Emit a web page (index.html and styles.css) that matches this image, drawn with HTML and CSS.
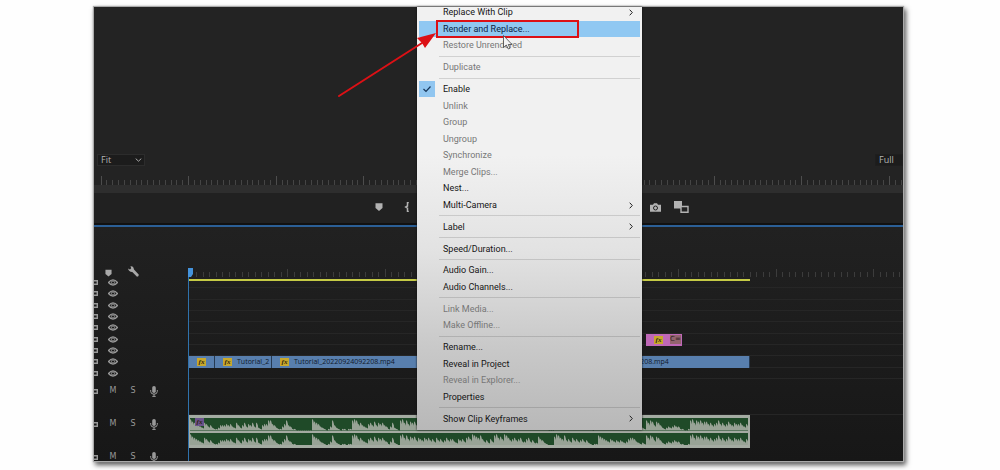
FILE: index.html
```html
<!DOCTYPE html>
<html lang="en">
<head>
<meta charset="utf-8">
<title>Render and Replace</title>
<link rel="stylesheet" href="styles.css">
</head>
<body>
<svg class="defs" aria-hidden="true">
  <symbol id="eye" viewBox="0 0 10 7"><path d="M.5 3.500Q5-1.800 9.500 3.500Q5 8.800.5 3.500Z" fill="none" stroke="currentColor" stroke-width="1.300"/><circle cx="5" cy="3.500" r="1.600" fill="none" stroke="currentColor"/></symbol>
  <symbol id="patch" viewBox="0 0 4 5"><path d="M0 .7H3.300V4.300H0" fill="none" stroke="currentColor" stroke-width="1.400"/></symbol>
  <symbol id="mic" viewBox="0 0 8 11"><rect x="2.200" y="0" width="3.600" height="7" rx="1.800" fill="currentColor"/><path d="M.7 4V5.500Q.8 8.200 4 8.200T7.300 5.500V4M4 8V10.500M2.300 10.400H5.700" fill="none" stroke="currentColor"/></symbol>
  <symbol id="marker" viewBox="0 0 8 8"><path d="M.5.3H7.500V5L4 8L.5 5Z" fill="currentColor"/></symbol>
  <symbol id="sub" viewBox="0 0 4 7"><path d="M.7.700L3.300 3.500L.7 6.300" fill="none" stroke="#222" stroke-width="1"/></symbol>
</svg>
<main class="panel">
  <section class="monitor">
    <div class="zoom-box">
      <select class="zoom-level" aria-label="Zoom level"><option>Fit</option></select>
      <svg class="chevron" viewBox="0 0 7 4" aria-hidden="true"><path d="M.7.600L3.500 3.200L6.300.6" fill="none" stroke="#aaa"/></svg>
    </div>
    <select class="resolution" aria-label="Playback resolution"><option>Full</option></select>
  </section>
  <svg class="monitor-ruler" data-start="6.500" data-major="87.600" data-height="9"></svg>
  <div class="scrollbar"></div>
  <nav class="transport" aria-label="Playback controls">
    <div class="marks">
      <button aria-label="Add marker"><svg class="i8"><use href="#marker"/></svg></button>
      <button aria-label="Mark in"><svg width="6" height="10" viewBox="0 0 6 10"><path d="M4.800.5H3.500V4L1.800 5L3.500 6V9.500H4.800" fill="none" stroke="currentColor" stroke-width="1.500"/></svg></button>
    </div>
    <div class="exports">
      <button aria-label="Export frame"><svg width="11" height="9" viewBox="0 0 11 9"><path d="M0 1.800H3L4 .3H7L8 1.800H11V8.700H0Z" fill="currentColor"/><circle cx="5.500" cy="5" r="2" fill="none" stroke="#222"/></svg></button>
      <button aria-label="Comparison view"><svg width="15" height="12" viewBox="0 0 15 12"><path d="M0 0H8V7.500H0Z" fill="currentColor"/><path d="M7 5.500H14V11.300H7Z" fill="#222" stroke="currentColor" stroke-width="1.400"/></svg></button>
    </div>
  </nav>
  <section class="timeline">
    <div class="time-head">
      <div class="time-tools">
        <button aria-label="Marker"><svg class="i7"><use href="#marker"/></svg></button>
        <button aria-label="Settings"><svg width="11" height="11" viewBox="0 0 11 11"><path d="M0 2.500L2 3.400L3.200 2.300L2.400.3Q5.500-.3 6 3.600L10.700 8.500Q11 10.400 9 10.700L4.300 5.900Q.8 6 0 2.500Z" fill="currentColor"/></svg></button>
      </div>
      <div class="time-scale">
        <svg class="time-ruler" data-start="1.500" data-major="97.700" data-height="8"></svg>
        <svg class="playhead" viewBox="0 0 6 9"><path d="M0 0H5V6L3 9H0Z" fill="#4493dc"/></svg>
        <div class="work-area"></div>
      </div>
    </div>
    <div class="tracks">
      <div class="heads">
        <div class="video-heads">
          <div class="head"><svg class="patch"><use href="#patch"/></svg><svg class="eye"><use href="#eye"/></svg></div>
          <div class="head"><svg class="patch"><use href="#patch"/></svg><svg class="eye"><use href="#eye"/></svg></div>
          <div class="head"><svg class="patch"><use href="#patch"/></svg><svg class="eye"><use href="#eye"/></svg></div>
          <div class="head"><svg class="patch"><use href="#patch"/></svg><svg class="eye"><use href="#eye"/></svg></div>
          <div class="head"><svg class="patch"><use href="#patch"/></svg><svg class="eye"><use href="#eye"/></svg></div>
          <div class="head"><svg class="patch"><use href="#patch"/></svg><svg class="eye"><use href="#eye"/></svg></div>
          <div class="head"><svg class="patch"><use href="#patch"/></svg><svg class="eye"><use href="#eye"/></svg></div>
          <div class="head"><svg class="patch"><use href="#patch"/></svg><svg class="eye"><use href="#eye"/></svg></div>
          <div class="head"><svg class="patch"><use href="#patch"/></svg><svg class="eye"><use href="#eye"/></svg></div>
        </div>
        <div class="audio-heads">
          <div class="head audio"><svg class="patch"><use href="#patch"/></svg><button>M</button><button>S</button><svg class="mic"><use href="#mic"/></svg></div>
          <div class="head audio"><svg class="patch"><use href="#patch"/></svg><button>M</button><button>S</button><svg class="mic"><use href="#mic"/></svg></div>
          <div class="head audio"><svg class="patch"><use href="#patch"/></svg><button>M</button><button>S</button><svg class="mic"><use href="#mic"/></svg></div>
        </div>
      </div>
      <div class="lanes">
        <div class="video-lanes">
          <div class="lane"></div><div class="lane"></div><div class="lane"></div><div class="lane"></div><div class="lane"></div>
          <div class="lane"><div class="title-clip"><i class="fx">fx</i><span class="thumb">C=</span></div></div>
          <div class="lane"></div>
          <div class="lane"><div class="video-clips">
            <div class="clip"><i class="fx">fx</i></div>
            <div class="clip"><i class="fx">fx</i><span>Tutorial_2</span></div>
            <div class="clip"><i class="fx">fx</i><span>Tutorial_20220924092208.mp4</span></div>
            <div class="clip"><i class="fx">fx</i><span>Tutorial_20220924092208.mp4</span></div>
          </div></div>
          <div class="lane"></div>
        </div>
        <div class="audio-gap"></div>
        <div class="audio-clip">
          <svg class="wave" viewBox="0 0 279 10" preserveAspectRatio="none"></svg>
          <svg class="wave" viewBox="0 0 279 10" preserveAspectRatio="none"></svg>
          <i class="fx audio-fx">fx</i>
        </div>
      </div>
    </div>
  </section>

  <div class="menu" role="menu">
    <button role="menuitem" class="item"><span>Replace With Clip</span><svg class="sub"><use href="#sub"/></svg></button>
    <button role="menuitem" class="item active"><span>Render and Replace...</span></button>
    <button role="menuitem" class="item" disabled><span>Restore Unrendered</span></button>
    <div class="sep"></div>
    <button role="menuitem" class="item" disabled><span>Duplicate</span></button>
    <div class="sep"></div>
    <button role="menuitemcheckbox" aria-checked="true" class="item"><svg class="check" viewBox="0 0 16 16"><path d="M4.500 8L7 10.500L11.500 5.500" fill="none" stroke="#16365a" stroke-width="1.200"/></svg><span>Enable</span></button>
    <button role="menuitem" class="item" disabled><span>Unlink</span></button>
    <button role="menuitem" class="item" disabled><span>Group</span></button>
    <button role="menuitem" class="item" disabled><span>Ungroup</span></button>
    <button role="menuitem" class="item" disabled><span>Synchronize</span></button>
    <button role="menuitem" class="item" disabled><span>Merge Clips...</span></button>
    <button role="menuitem" class="item"><span>Nest...</span></button>
    <button role="menuitem" class="item"><span>Multi-Camera</span><svg class="sub"><use href="#sub"/></svg></button>
    <div class="sep"></div>
    <button role="menuitem" class="item"><span>Label</span><svg class="sub"><use href="#sub"/></svg></button>
    <div class="sep"></div>
    <button role="menuitem" class="item"><span>Speed/Duration...</span></button>
    <div class="sep"></div>
    <button role="menuitem" class="item"><span>Audio Gain...</span></button>
    <button role="menuitem" class="item"><span>Audio Channels...</span></button>
    <div class="sep"></div>
    <button role="menuitem" class="item" disabled><span>Link Media...</span></button>
    <button role="menuitem" class="item" disabled><span>Make Offline...</span></button>
    <div class="sep"></div>
    <button role="menuitem" class="item"><span>Rename...</span></button>
    <button role="menuitem" class="item"><span>Reveal in Project</span></button>
    <button role="menuitem" class="item" disabled><span>Reveal in Explorer...</span></button>
    <button role="menuitem" class="item"><span>Properties</span></button>
    <div class="sep"></div>
    <button role="menuitem" class="item"><span>Show Clip Keyframes</span><svg class="sub"><use href="#sub"/></svg></button>
  </div>
  <svg class="callout" viewBox="0 0 500 100" aria-hidden="true">
    <rect x="343" y="14" width="141" height="16" fill="none" stroke="#dc1015" stroke-width="2"/>
    <path d="M245 89L328 36" stroke="#dc1015" stroke-width="2" stroke-linecap="round"/>
    <path d="M342 26L331 41L328 36L323 31Z" fill="#dc1015"/>
    <path d="M409.500 28.500V40.500L412.300 38L414.300 42L416 41.200L414.300 37.500H418Z" fill="#f4f4f4" stroke="#444" stroke-width=".8"/>
  </svg>
</main>
<script src="timeline.js"></script>
</body>
</html>
```

FILE: timeline.js
```js
const NS = "http://www.w3.org/2000/svg";

function addPath(svg, d, className) {
  const path = document.createElementNS(NS, "path");
  path.setAttribute("d", d);
  path.setAttribute("class", className);
  svg.append(path);
}

// Rulers: fifteen divisions between two major ticks.
document.querySelectorAll("svg[data-major]").forEach((svg) => {
  const start = Number(svg.dataset.start);
  const step = Number(svg.dataset.major) / 15;
  const height = Number(svg.dataset.height);
  let minor = "";
  let major = "";
  for (let i = 0; start + i * step < svg.clientWidth; i++) {
    const x = Math.round(start + i * step) + 0.5;
    if (i % 15 === 0) major += `M${x} 0V${height}`;
    else minor += `M${x} ${height - 5}V${height}`;
  }
  addPath(svg, minor, "tick-minor");
  addPath(svg, major, "tick-major");
});

// Peak level of the audio, one digit per sample.
const peaks = [
  "9765432653", "4211244454", "5326424635", "4636214558", "8542113584",
  "31100000000", "97653210", "138421", "011011", "898564325647",
  "465643136210", "896857674", "65465645364534645532545367",
  "598768", "534253", "8967598", "64564563", "356342", "27542", "1000",
  "798658", "453645345342", "1011", "8765", "43543434323", "5665", "32121",
  "8687476", "421232", "343311", "001", "896878677", "56456856457546556435"
].join("");

document.querySelectorAll(".wave").forEach((svg) => {
  let d = "M0 10";
  [...peaks].forEach((level, i) => {
    d += `V${9.6 - level}L${i + 0.6} ${9.8 - level * 0.9}L${i + 1} ${9.8 - level * 0.6}`;
  });
  addPath(svg, d + "V10Z", "wave-fill");
});
```

FILE: styles.css
```css
* { box-sizing: border-box; }

body {
  margin: 0;
  min-height: 100vh;
  display: flex;
  background: #fefefe;
  font-family: Roboto, "Open Sans", sans-serif;
  font-size: 9px;
}

button {
  margin: 0;
  padding: 0;
  border: 0;
  background: none;
  color: inherit;
  font: inherit;
}

svg { display: block; }
.defs { position: absolute; width: 0; height: 0; }

.panel {
  position: relative;
  flex: 1;
  margin: 7px 97px 9px 94px;
  display: flex;
  flex-direction: column;
  background: #232323;
  box-shadow: 0 0 1px 1px #aaa, 2px 3px 5px 1px #555;
  color: #a8a8a8;
}

.monitor {
  flex: 1;
  display: flex;
  justify-content: space-between;
  align-items: flex-end;
  padding: 0 0 10px 3px;
}
.zoom-box { position: relative; }
.zoom-level, .resolution {
  display: block;
  appearance: none;
  height: 12px;
  padding: 0 3px;
  border: 1px solid #2c2c2c;
  border-radius: 0;
  background: #1c1c1c;
  color: #b4b4b4;
  font: 9px/10px "Open Sans", "Noto Sans", sans-serif;
}
.zoom-level { width: 48px; }
.resolution { width: 28px; border-color: #1e1e1e; }
.chevron {
  position: absolute;
  right: 3px;
  top: 4px;
  width: 7px;
  height: 4px;
  pointer-events: none;
}

.monitor-ruler { width: 100%; height: 9px; }
.tick-minor { stroke: #454545; }
.tick-major { stroke: #4d4d4d; }
.scrollbar { height: 8px; background: #2e2e2e; }

.transport {
  height: 32px;
  padding: 0 0 2px 281px;
  display: flex;
  align-items: center;
  gap: 240px;
  background: #212121;
  border-bottom: 2px solid #111;
  color: #b2b2b2;
}
.marks, .exports {
  display: flex;
  align-items: center;
  gap: 21px;
}
.exports { gap: 13px; }
.i8 { width: 8px; height: 8px; }
.i7 { width: 7px; height: 8px; }

.timeline {
  height: 236px;
  display: flex;
  flex-direction: column;
  overflow: hidden;
  border-top: 2px solid #2b5f96;
  background: linear-gradient(#212121, #171717);
  color: #999;
}
.time-head {
  height: 50px;
  flex: none;
  display: grid;
  grid-template-columns: 94px 1fr;
  align-items: end;
}
.time-tools {
  display: flex;
  align-items: flex-end;
  gap: 16px;
  padding: 0 0 0 11px;
  color: #a8a8a8;
}
.time-scale { position: relative; }
.time-ruler { width: 100%; height: 8px; }
.time-ruler path { stroke: #3c3c3c; }
.playhead {
  position: absolute;
  left: 0;
  bottom: 0;
  width: 6px;
  height: 9px;
}
.work-area {
  position: absolute;
  z-index: 1;
  left: 1px;
  right: 153px;
  bottom: -4px;
  height: 2px;
  background: #c5ca45;
}

.tracks {
  flex: 1;
  min-height: 0;
  display: grid;
  grid-template-columns: 94px 1fr;
}
.video-heads, .video-lanes {
  height: 102px;
  display: grid;
  grid-template-rows: repeat(9, 1fr);
}
.head {
  display: grid;
  grid-template-columns: 9px 20px 20px 22px;
  align-items: center;
  justify-items: center;
}
.patch { width: 4px; height: 5px; justify-self: start; }
.eye { width: 10px; height: 7px; }
.mic { width: 8px; height: 11px; }
.audio {
  height: 33px;
  padding-bottom: 9px;
  font-family: "DejaVu Sans", sans-serif;
  font-size: 8px;
  line-height: 8px;
}
.lanes { min-width: 0; border-left: 1px solid #2f72ac; }
.lane { min-width: 0; min-height: 0; border-bottom: 1px solid #262626; }
.video-clips {
  height: 12px;
  margin-right: 153px;
  display: grid;
  grid-template-columns: 26px 57px 274px 1fr;
}
.clip {
  display: flex;
  align-items: center;
  gap: 5px;
  padding-left: 8px;
  overflow: hidden;
  background: #587fae;
  border-right: 1px solid #263a52;
  color: #10192a;
  font-family: "Open Sans", sans-serif;
  font-size: 7px;
  line-height: 10px;
  white-space: nowrap;
}
.fx {
  flex: none;
  width: 9px;
  height: 8px;
  background: #c8a82c;
  color: #2b230c;
  font: italic bold 7px/8px "Liberation Serif", serif;
  text-align: center;
}
.title-clip {
  width: 36px;
  height: 12px;
  margin: 0 221px 0 auto;
  padding-left: 8px;
  display: flex;
  align-items: center;
  gap: 7px;
  background: #bf68b7;
}
.thumb {
  width: 11px;
  height: 9px;
  background: #93646e;
  color: #2d1c22;
  font: 7px/9px "DejaVu Sans", sans-serif;
}
.audio-gap {
  height: 36px;
  border-bottom: 1px solid #262626;
}
.audio-clip {
  position: relative;
  height: 33px;
  margin-right: 153px;
  padding: 3px 2px 2px 1px;
  display: grid;
  grid-template-rows: 1fr 1fr;
  gap: 1px;
  background: #a4aba2;
}
.wave {
  width: 100%;
  height: 100%;
  background: #1f4a28;
  border-bottom: 1px solid #a4aba2;
}
.wave-fill { fill: #98a396; }
.audio-fx {
  position: absolute;
  left: 6px;
  top: 3px;
  background: #6c548d;
}

.menu {
  position: absolute;
  z-index: 2;
  left: 323px;
  top: 0;
  bottom: 31px;
  width: 225px;
  padding: 0 2px 3px;
  display: flex;
  flex-direction: column;
  background: linear-gradient(#f1f1f1 0 35%, #e2e2e2 58%, #c9c9c9 80%, #b8b8b8);
  box-shadow: 0 0 2px #111;
}
.item {
  flex: 22 0 0;
  min-height: 0;
  display: grid;
  grid-template-columns: 16px 1fr 4px;
  align-items: center;
  column-gap: 8px;
  padding-right: 7px;
  color: #151515;
  line-height: 12px;
  text-align: left;
}
.item:first-child { margin-top: -3px; }
.item span { grid-column: 2; grid-row: 1; white-space: nowrap; }
.item:disabled { color: #777; }
.item.active { background: #90c8f2; color: #0c2444; }
.check {
  grid-column: 1;
  grid-row: 1;
  width: 16px;
  height: 16px;
  background: #91c6f0;
}
.sub { grid-column: 3; grid-row: 1; width: 4px; height: 7px; }
.sep { flex: 7 0 0; margin-left: 20px; }
.sep::before {
  content: "";
  display: block;
  height: 1px;
  margin-top: 2px;
  background: rgba(0, 0, 0, .13);
}

.callout {
  position: absolute;
  z-index: 3;
  left: 0;
  top: 0;
  width: 500px;
  height: 100px;
  pointer-events: none;
}
```
